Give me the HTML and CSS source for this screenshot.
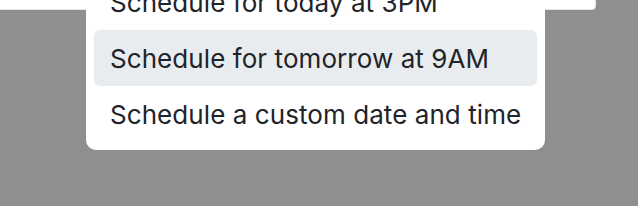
FILE: index.html
```html
<!DOCTYPE html>
<html>
<head>
<meta charset="utf-8">
<link rel="stylesheet" href="styles.css">
</head>
<body>
<div class="backdrop">
  <div class="sheet"></div>
  <ul class="menu">
    <li class="item">Schedule for today at 3PM</li>
    <li class="item active">Schedule for tomorrow at 9AM</li>
    <li class="item">Schedule a custom date and time</li>
  </ul>
</div>
</body>
</html>
```
FILE: styles.css
```css
html, body {
  margin: 0;
  padding: 0;
  width: 638px;
  height: 206px;
  overflow: hidden;
  background: #8f8f8f;
  font-family: Inter, "Noto Sans", sans-serif;
}
.backdrop {
  position: relative;
  width: 638px;
  height: 206px;
}
.sheet {
  position: absolute;
  left: -10px;
  top: -40px;
  width: 604px;
  height: 48px;
  background: #ffffff;
  border: 1px solid #e3e5e8;
  border-radius: 0 0 4px 4px;
}
.menu {
  position: absolute;
  left: 86px;
  top: -34px;
  width: 443px;
  margin: 0;
  padding: 8px;
  list-style: none;
  background: #ffffff;
  border-radius: 10px;
  display: flex;
  flex-direction: column;
}
.item {
  height: 56px;
  display: flex;
  align-items: center;
  padding: 0 16px;
  border-radius: 6px;
  font-size: 26px;
  letter-spacing: 0.07px;
  color: #212429;
  white-space: nowrap;
}
.item.active {
  background: #e9ecef;
}
```
